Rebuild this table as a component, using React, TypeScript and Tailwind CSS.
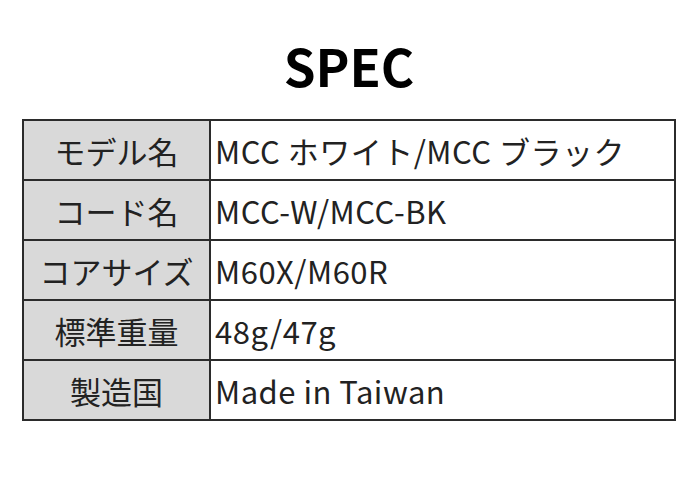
const rows: [string, string][] = [
  ['モデル名', 'MCC ホワイト/MCC ブラック'],
  ['コード名', 'MCC-W/MCC-BK'],
  ['コアサイズ', 'M60X/M60R'],
  ['標準重量', '48g/47g'],
  ['製造国', 'Made in Taiwan'],
]

export default function App() {
  return (
    <div
      className="h-[487px] w-[698px] bg-white pt-[40px]"
      style={{ fontFamily: '"Noto Sans CJK JP", "Noto Sans", sans-serif' }}
    >
      {/* Title */}
      <h1 className="text-center text-[51px] font-bold leading-[51px] text-black">SPEC</h1>

      {/* Spec table */}
      <table className="ml-[22px] mt-[28px] w-[654px] table-fixed border-collapse border-2 border-[#2b2b2b] text-[31px] text-[#222]">
        <tbody>
          {rows.map(([label, value]) => (
            <tr key={label} className="h-[60px]">
              <td className="w-[187px] border-2 border-[#2b2b2b] bg-[#d9d9d9] text-center leading-none">
                {label}
              </td>
              <td className="border-2 border-[#2b2b2b] pl-[4px] leading-none tracking-[0.5px] whitespace-nowrap">
                {value}
              </td>
            </tr>
          ))}
        </tbody>
      </table>
    </div>
  )
}
